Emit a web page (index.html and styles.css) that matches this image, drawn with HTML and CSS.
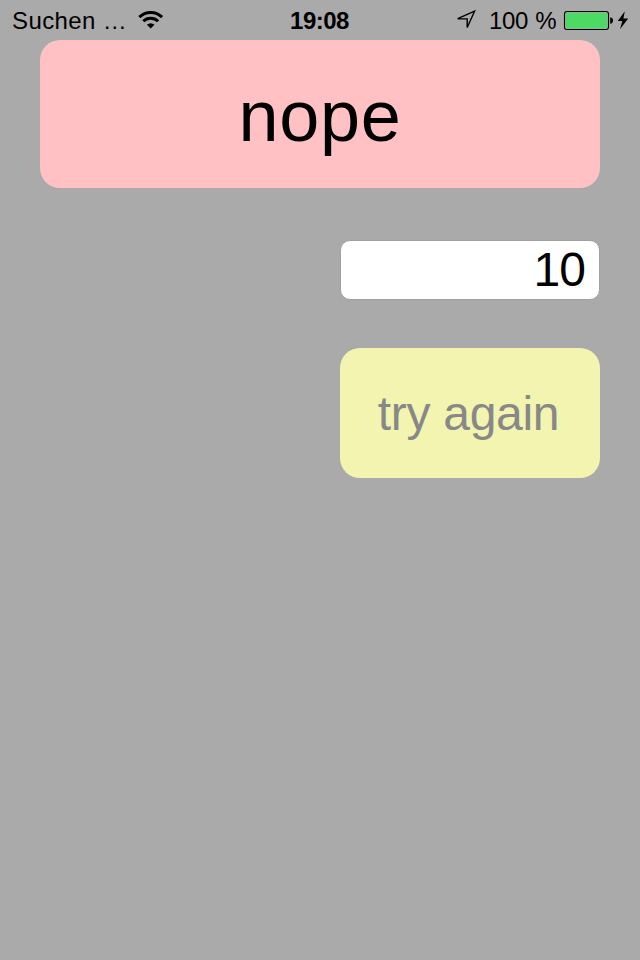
FILE: index.html
```html
<!DOCTYPE html>
<html lang="de">
<head>
<meta charset="utf-8">
<title>nope</title>
<link rel="stylesheet" href="styles.css">
</head>
<body>
<header class="status">
  <div class="status-left">
    <span class="carrier">Suchen …</span>
    <svg class="wifi" width="26" height="20" viewBox="0 0 26 20" fill="none" stroke="#000" stroke-width="3">
      <path d="M1.3 7.1a16.2 16.2 0 0 1 22.8 0"/>
      <path d="M5.3 11.2a10.5 10.5 0 0 1 14.8 0"/>
      <path d="M12.7 18.6L8.9 14.8Q12.7 11.6 16.5 14.8Z" fill="#000" stroke="none"/>
    </svg>
  </div>
  <time class="clock">19:08</time>
  <div class="status-right">
    <svg class="location" width="22" height="22" viewBox="0 0 22 22" fill="none" stroke="#000" stroke-width="1.4">
      <path d="M1.7 9.7L18.6 2.2L11.2 18.5L11.2 9.9Z"/>
    </svg>
    <span class="percent">100 <span class="sign">%</span></span>
    <svg class="battery" width="48" height="20" viewBox="0 0 48 20">
      <rect x="0.5" y="1.5" width="44" height="18" rx="2.5" fill="none" stroke="#000" stroke-width="1.1"/>
      <rect x="1.7" y="2.7" width="41.6" height="15.6" rx="1" fill="#4cd964"/>
      <path d="M46.2 7.2Q49 7.7 49 10.5Q49 13.3 46.2 13.8Z"/>
    </svg>
    <svg class="bolt" width="12" height="20" viewBox="0 0 12 20">
      <path d="M7.8 1.3L0.8 11H5.3L3 19.2L11.2 8.6H6.4Z"/>
    </svg>
  </div>
</header>
<main class="content">
  <div class="result">nope</div>
  <input class="guess" type="text" value="10" aria-label="10">
  <button class="retry" type="button">try again</button>
</main>
</body>
</html>
```
FILE: styles.css
```css
* { box-sizing: border-box; }
body {
  margin: 0;
  min-height: 960px;
  background: #aaa;
  color: #000;
  font-family: "Liberation Sans", Arial, sans-serif;
}
.status {
  display: grid;
  grid-template-columns: 1fr auto 1fr;
  grid-template-rows: 40px;
  height: 40px;
  padding: 0 11px 0 12px;
  font-size: 24px;
  white-space: nowrap;
}
.status-left, .status-right { display: flex; align-items: center; height: 40px; }
.status-right { justify-content: flex-end; }
.carrier, .percent, .clock { height: 40px; padding-top: 2px; line-height: 38px; }
.carrier { width: 126px; letter-spacing: 0.4px; }
.clock { margin-right: 2px; font-weight: bold; letter-spacing: -0.5px; }
.wifi, .battery { margin-top: -1px; }
.location { margin-right: 11px; }
.percent { width: 75px; letter-spacing: -0.4px; }
.sign { margin-left: 1px; font-size: 24px; }
.battery { overflow: visible; }
.bolt { margin-left: 5px; }
.content {
  display: flex;
  flex-direction: column;
  align-items: flex-end;
  padding: 0 40px;
}
.result {
  width: 560px;
  height: 148px;
  padding-top: 4px;
  border-radius: 20px;
  background: #ffc1c3;
  font-size: 72px;
  line-height: 144px;
  letter-spacing: 0.7px;
  text-align: center;
}
.guess {
  width: 260px;
  height: 60px;
  margin-top: 52px;
  padding: 0 14px 2px;
  border: 1px solid #a0a0a0;
  border-radius: 10px;
  background: #fff;
  color: #000;
  font: 48px/56px "Liberation Sans", Arial, sans-serif;
  letter-spacing: -1px;
  text-align: right;
}
.retry {
  width: 260px;
  height: 130px;
  margin-top: 48px;
  padding: 2px 3px 0 0;
  border: 0;
  border-radius: 20px;
  background: #f2f4b0;
  color: #888;
  font: 48px/128px "Liberation Sans", Arial, sans-serif;
  letter-spacing: -0.3px;
}
```
